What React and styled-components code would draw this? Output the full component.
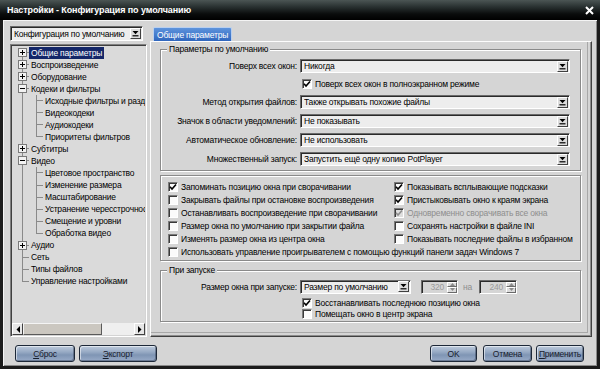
import React from "react";
import styled, { createGlobalStyle } from "styled-components";

const GlobalStyle = createGlobalStyle`
  html, body {
    margin: 0;
    padding: 0;
    background: #111;
  }
  body {
    font-family: "Liberation Sans", Arial, sans-serif;
    font-size: 8.5px;
    letter-spacing: -0.2px;
    color: #000;
  }
  * {
    box-sizing: border-box;
  }
`;

const Window = styled.div`
  width: 600px;
  height: 369px;
  display: flex;
  flex-direction: column;
  overflow: hidden;
`;

const TitleBar = styled.div`
  height: 20px;
  flex: none;
  display: flex;
  align-items: center;
  justify-content: space-between;
  padding: 0 6px 0 7px;
  background: linear-gradient(#4b5554 0%, #283030 35%, #0a0c0c 70%, #000 100%);
`;

const Title = styled.span`
  color: #fff;
  font-weight: bold;
  font-size: 9px;
  letter-spacing: -0.1px;
`;

const Frame = styled.div`
  flex: 1;
  display: flex;
  flex-direction: column;
  min-height: 0;
  background: #d5d5d5;
  border: 3px solid #1b1b1b;
  border-top: 0;
  box-shadow: inset 1px 1px #f4f4f4, inset -1px -1px #8a8a8a;
`;

const Main = styled.div`
  flex: 1;
  display: flex;
  gap: 3px;
  min-height: 0;
  padding: 6px 5px 0 7px;
`;

const LeftPane = styled.div`
  width: 137px;
  flex: none;
  display: flex;
  flex-direction: column;
  gap: 3px;
`;

/* ---------- combobox ---------- */

const SelectBox = styled.div`
  width: ${(p) => p.$w}px;
  height: ${(p) => p.$h || 15}px;
  flex: none;
  display: flex;
  align-items: center;
  padding: 0 1px 0 3px;
  background: #ededed;
  border: 1px solid;
  border-color: #6a6a6a #fff #fff #6a6a6a;
  box-shadow: inset 1px 1px #2a2a2a;
  white-space: nowrap;
  overflow: hidden;
`;

const SelectText = styled.span`
  flex: 1;
  overflow: hidden;
`;

const DropButton = styled.span`
  width: 11px;
  height: 11px;
  flex: none;
  display: flex;
  align-items: center;
  justify-content: center;
  background: #dcdcdc;
  border: 1px solid;
  border-color: #fff #404040 #404040 #fff;
`;

const Arrow = () => (
  <svg width="7" height="7" viewBox="0 0 7 7">
    <path d="M0.5 1h6L3.5 4.2z" fill="#000" />
    <rect x="0.5" y="5.2" width="6" height="1.2" fill="#000" />
  </svg>
);

const Select = ({ value, w, h }) => (
  <SelectBox $w={w} $h={h}>
    <SelectText>{value}</SelectText>
    <DropButton>
      <Arrow />
    </DropButton>
  </SelectBox>
);

/* ---------- tree ---------- */

const Tree = styled.div`
  flex: 1;
  display: flex;
  flex-direction: column;
  min-height: 0;
  background: #dadada;
  border: 1px solid;
  border-color: #808080 #fff #fff #808080;
  box-shadow: inset 1px 1px #404040, inset -1px -1px #d4d4d4;
  padding: 1px;
`;

const TreeList = styled.div`
  flex: 1;
  overflow: hidden;
  padding: 0.5px 0 0 3px;
  white-space: nowrap;
`;

const TreeRow = styled.div`
  height: 12.05px;
  display: flex;
  align-items: stretch;
`;

const lineColor = "#8a8a8a";

const Guide = styled.span`
  width: 14px;
  flex: none;
  display: flex;
  align-items: center;
  justify-content: center;
  background-repeat: no-repeat;
  background-image: ${(p) =>
    [
      p.$vert && `linear-gradient(${lineColor}, ${lineColor})`,
      p.$horiz && `linear-gradient(${lineColor}, ${lineColor})`,
    ]
      .filter(Boolean)
      .join(", ") || "none"};
  background-size: ${(p) =>
    [
      p.$vert && (p.$vert === "full" ? "1px 100%" : "1px 50%"),
      p.$horiz && "7px 1px",
    ]
      .filter(Boolean)
      .join(", ") || "auto"};
  background-position: ${(p) =>
    [
      p.$vert && (p.$vert === "bottom" ? "7px 100%" : "7px 0"),
      p.$horiz && "7px 50%",
    ]
      .filter(Boolean)
      .join(", ") || "0 0"};
`;

const Expander = styled.span`
  width: 9px;
  height: 9px;
  display: flex;
  align-items: center;
  justify-content: center;
  background: #f2f2f2;
  border: 1px solid #7a7a7a;
`;

const ItemText = styled.span`
  display: flex;
  align-items: center;
  padding: 0 2px;
  color: ${(p) => (p.$sel ? "#fff" : "#000")};
  background: ${(p) => (p.$sel ? "#142769" : "transparent")};
`;

const PlusMinus = ({ open }) => (
  <svg width="5" height="5" viewBox="0 0 5 5">
    <rect x="0" y="2" width="5" height="1" fill="#000" />
    {!open && <rect x="2" y="0" width="1" height="5" fill="#000" />}
  </svg>
);

const treeData = [
  { t: "Общие параметры", box: "+", sel: true },
  { t: "Воспроизведение", box: "+" },
  { t: "Оборудование", box: "+" },
  {
    t: "Кодеки и фильтры",
    box: "-",
    children: [
      "Исходные фильтры и разделители",
      "Видеокодеки",
      "Аудиокодеки",
      "Приоритеты фильтров",
    ],
  },
  { t: "Субтитры", box: "+" },
  {
    t: "Видео",
    box: "-",
    children: [
      "Цветовое пространство",
      "Изменение размера",
      "Масштабирование",
      "Устранение чересстрочности",
      "Смещение и уровни",
      "Обработка видео",
    ],
  },
  { t: "Аудио", box: "+" },
  { t: "Сеть" },
  { t: "Типы файлов" },
  { t: "Управление настройками" },
];

const ScrollBar = styled.div`
  height: 12px;
  flex: none;
  display: flex;
  background: #efefef;
`;

const ScrollArrow = styled.span`
  width: 11px;
  flex: none;
  display: flex;
  align-items: center;
  justify-content: center;
  background: #e6e6e6;
  border: 1px solid;
  border-color: #fff #404040 #404040 #fff;
`;

const ScrollThumb = styled.span`
  width: 79px;
  flex: none;
  background: #cbc7c0;
  border: 1px solid;
  border-color: #f4f4f4 #5a5a5a #5a5a5a #f4f4f4;
`;

const ScrollTrack = styled.span`
  flex: 1;
`;

const TreeView = () => {
  const rows = [];
  treeData.forEach((item, i) => {
    const first = i === 0;
    const last = i === treeData.length - 1;
    rows.push(
      <TreeRow key={item.t}>
        <Guide $vert={first ? "bottom" : last ? "top" : "full"} $horiz>
          {item.box && (
            <Expander>
              <PlusMinus open={item.box === "-"} />
            </Expander>
          )}
        </Guide>
        <ItemText $sel={item.sel}>{item.t}</ItemText>
      </TreeRow>
    );
    (item.children || []).forEach((c, j) => {
      const lastChild = j === item.children.length - 1;
      rows.push(
        <TreeRow key={c}>
          <Guide $vert="full" />
          <Guide $vert={lastChild ? "top" : "full"} $horiz />
          <ItemText>{c}</ItemText>
        </TreeRow>
      );
    });
  });
  return (
    <Tree>
      <TreeList>{rows}</TreeList>
      <ScrollBar>
        <ScrollArrow>
          <svg width="4" height="7" viewBox="0 0 4 7">
            <path d="M4 0v7L0.5 3.5z" fill="#000" />
          </svg>
        </ScrollArrow>
        <ScrollThumb />
        <ScrollTrack />
        <ScrollArrow>
          <svg width="4" height="7" viewBox="0 0 4 7">
            <path d="M0 0v7l3.5-3.5z" fill="#000" />
          </svg>
        </ScrollArrow>
      </ScrollBar>
    </Tree>
  );
};

/* ---------- right side ---------- */

const RightPane = styled.div`
  flex: 1;
  display: flex;
  flex-direction: column;
  min-width: 0;
`;

const TabStrip = styled.div`
  height: 15px;
  flex: none;
  display: flex;
  align-items: flex-end;
  padding-left: 3px;
`;

const Tab = styled.div`
  width: 79px;
  height: 14px;
  display: flex;
  align-items: center;
  padding-left: 3px;
  white-space: nowrap;
  color: #fff;
  background: linear-gradient(#5d93dc, #2f66bd);
  border: 1px solid #b9cfee;
  border-bottom: 0;
  border-radius: 2px 2px 0 0;
`;

const TabPanel = styled.div`
  flex: 1;
  display: flex;
  flex-direction: column;
  gap: 4px;
  padding: 2px 10px 0 9px;
  border: 1px solid;
  border-color: #fdfdfd #404040 #404040 #fdfdfd;
  box-shadow: inset -1px -1px #8c8c8c, inset -3px -3px #d5d5d5,
    inset -4px -4px #a8a8a8;
`;

const Group = styled.fieldset`
  margin: 0;
  min-width: 0;
  padding: ${(p) => p.$pad};
  border: 1px solid #8a8a8a;
  box-shadow: inset 1px 1px #fff, 1px 1px #fff;
  display: flex;
  flex-direction: column;
  gap: ${(p) => p.$gap || 0}px;
`;

const Legend = styled.legend`
  margin-left: 6px;
  padding: 0 2px;
  line-height: 11px;
  background: #d5d5d5;
`;

const FieldRow = styled.div`
  display: flex;
  align-items: center;
  height: ${(p) => p.$h || 14}px;
  gap: 3px;
`;

const FieldLabel = styled.span`
  width: 136px;
  flex: none;
  text-align: right;
  white-space: nowrap;
`;

const Indent = styled.div`
  padding-left: 141px;
`;

const CheckRow = styled.label`
  display: flex;
  align-items: center;
  gap: 3px;
  height: ${(p) => p.$h || 13}px;
  white-space: nowrap;
  color: ${(p) => (p.$disabled ? "#8e8e8e" : "#000")};
  grid-column: ${(p) => (p.$span ? "1 / -1" : "auto")};
`;

const Box = styled.span`
  width: 10px;
  height: 10px;
  flex: none;
  display: flex;
  align-items: center;
  justify-content: center;
  background: ${(p) => (p.$disabled ? "#dedede" : "#fbfbfb")};
  border: 1px solid;
  border-color: #7a7a7a #fff #fff #7a7a7a;
  box-shadow: inset 1px 1px #3a3a3a;
`;

const Check = ({ checked, disabled, children, h, span }) => (
  <CheckRow $disabled={disabled} $h={h} $span={span}>
    <Box $disabled={disabled}>
      {checked && (
        <svg width="8" height="8" viewBox="0 0 8 8">
          <path
            d="M1 3.8l2 2.2L7 1.5"
            fill="none"
            stroke={disabled ? "#8e8e8e" : "#000"}
            strokeWidth="1.6"
          />
        </svg>
      )}
    </Box>
    {children}
  </CheckRow>
);

const CheckGrid = styled.div`
  display: grid;
  grid-template-columns: 226px 1fr;
`;

const SpinBox = styled.div`
  width: ${(p) => p.$w}px;
  height: 14px;
  flex: none;
  display: flex;
  align-items: stretch;
  background: #d5d5d5;
  border: 1px solid;
  border-color: #6a6a6a #fff #fff #6a6a6a;
  box-shadow: inset 1px 1px #2a2a2a;
  padding: 1px 0 0 1px;
`;

const SpinValue = styled.span`
  flex: 1;
  display: flex;
  align-items: center;
  justify-content: flex-end;
  padding-right: 3px;
  color: #9a9a9a;
`;

const SpinButtons = styled.span`
  width: 10px;
  flex: none;
  display: flex;
  flex-direction: column;
`;

const SpinHalf = styled.span`
  flex: 1;
  display: flex;
  align-items: center;
  justify-content: center;
  background: #dcdcdc;
  border: 1px solid;
  border-color: #fff #6a6a6a #6a6a6a #fff;
`;

const Spin = ({ value, w }) => (
  <SpinBox $w={w}>
    <SpinValue>{value}</SpinValue>
    <SpinButtons>
      <SpinHalf>
        <svg width="5" height="3" viewBox="0 0 5 3">
          <path d="M0 3h5L2.5 0z" fill="#8a8a8a" />
        </svg>
      </SpinHalf>
      <SpinHalf>
        <svg width="5" height="3" viewBox="0 0 5 3">
          <path d="M0 0h5L2.5 3z" fill="#8a8a8a" />
        </svg>
      </SpinHalf>
    </SpinButtons>
  </SpinBox>
);

const Muted = styled.span`
  color: #8e8e8e;
  margin: 0 4px 0 2px;
`;

const Gap = styled.span`
  width: ${(p) => p.$w}px;
  flex: none;
`;

/* ---------- footer ---------- */

const Footer = styled.div`
  height: 29px;
  flex: none;
  display: flex;
  align-items: flex-start;
  padding: 8px 13px 0 12px;
  gap: 4px;
`;

const Button = styled.button`
  width: ${(p) => p.$w}px;
  height: 17px;
  margin-right: ${(p) => p.$mr || 0}px;
  padding: 0;
  border: 1px solid #1d2838;
  border-radius: 3px;
  background: linear-gradient(#bccadc 0%, #97aac4 40%, #7f95b4 60%, #98abc8 100%);
  box-shadow: inset 1px 1px rgba(255, 255, 255, 0.55),
    inset -1px -1px rgba(20, 30, 50, 0.35);
  font-family: "Liberation Sans", Arial, sans-serif;
  font-size: 8.5px;
  letter-spacing: -0.2px;
  color: #18202e;
  white-space: nowrap;
  u {
    text-decoration: underline;
  }
`;

const Spacer = styled.span`
  flex: 1;
`;

export default function App() {
  return (
    <>
      <GlobalStyle />
      <Window>
        <TitleBar>
          <Title>Настройки - Конфигурация по умолчанию</Title>
          <svg width="9" height="9" viewBox="0 0 9 9">
            <path d="M1 1l7 7M8 1L1 8" stroke="#fff" strokeWidth="2" />
          </svg>
        </TitleBar>
        <Frame>
          <Main>
            <LeftPane>
              <Select value="Конфигурация по умолчанию" w={133} />
              <TreeView />
            </LeftPane>
            <RightPane>
              <TabStrip>
                <Tab>Общие параметры</Tab>
              </TabStrip>
              <TabPanel>
                <Group $pad="4px 10px 4px 0" $gap={5}>
                  <Legend>Параметры по умолчанию</Legend>
                  <FieldRow>
                    <FieldLabel>Поверх всех окон:</FieldLabel>
                    <Select value="Никогда" w={270} h={14} />
                  </FieldRow>
                  <Indent>
                    <Check checked h={12}>
                      Поверх всех окон в полноэкранном режиме
                    </Check>
                  </Indent>
                  <FieldRow>
                    <FieldLabel>Метод открытия файлов:</FieldLabel>
                    <Select value="Также открывать похожие файлы" w={270} h={14} />
                  </FieldRow>
                  <FieldRow>
                    <FieldLabel>Значок в области уведомлений:</FieldLabel>
                    <Select value="Не показывать" w={270} h={14} />
                  </FieldRow>
                  <FieldRow>
                    <FieldLabel>Автоматическое обновление:</FieldLabel>
                    <Select value="Не использовать" w={270} h={14} />
                  </FieldRow>
                  <FieldRow>
                    <FieldLabel>Множественный запуск:</FieldLabel>
                    <Select value="Запустить ещё одну копию PotPlayer" w={270} h={14} />
                  </FieldRow>
                </Group>

                <Group $pad="4px 4px 2px 7px">
                  <CheckGrid>
                    <Check checked>Запоминать позицию окна при сворачивании</Check>
                    <Check checked>Показывать всплывающие подсказки</Check>
                    <Check>Закрывать файлы при остановке воспроизведения</Check>
                    <Check checked>Пристыковывать окно к краям экрана</Check>
                    <Check>Останавливать воспроизведение при сворачивании</Check>
                    <Check checked disabled>
                      Одновременно сворачивать все окна
                    </Check>
                    <Check>Размер окна по умолчанию при закрытии файла</Check>
                    <Check>Сохранять настройки в файле INI</Check>
                    <Check>Изменять размер окна из центра окна</Check>
                    <Check>Показывать последние файлы в избранном</Check>
                    <Check span>
                      Использовать управление проигрывателем с помощью функций
                      панели задач Windows 7
                    </Check>
                  </CheckGrid>
                </Group>

                <Group $pad="3.5px 10px 1.5px 0" $gap={4}>
                  <Legend>При запуске</Legend>
                  <FieldRow>
                    <FieldLabel>Размер окна при запуске:</FieldLabel>
                    <Select value="Размер по умолчанию" w={111} h={14} />
                    <Gap $w={4} />
                    <Spin value="320" w={37} />
                    <Muted>на</Muted>
                    <Spin value="240" w={38} />
                  </FieldRow>
                  <Indent>
                    <Check checked h={11}>
                      Восстанавливать последнюю позицию окна
                    </Check>
                    <Check h={11}>Помещать окно в центр экрана</Check>
                  </Indent>
                </Group>
              </TabPanel>
            </RightPane>
          </Main>
          <Footer>
            <Button $w={60}>
              <u>С</u>брос
            </Button>
            <Button $w={78}>
              <u>Э</u>кспорт
            </Button>
            <Spacer />
            <Button $w={47} $mr={2}>
              OK
            </Button>
            <Button $w={49}>Отмена</Button>
            <Button $w={48}>
              <u>П</u>рименить
            </Button>
          </Footer>
        </Frame>
      </Window>
    </>
  );
}
